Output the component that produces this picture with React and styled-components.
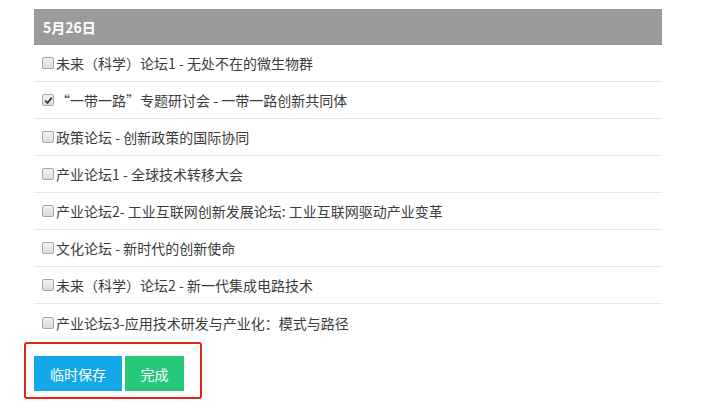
import React from "react";
import styled, { createGlobalStyle } from "styled-components";

const Global = createGlobalStyle`
  html, body { margin: 0; padding: 0; background: #fff; }
  body { font-family: "Noto Sans CJK SC", "Noto Sans", sans-serif; }
`;

const Page = styled.div`
  width: 628px;
  padding: 9px 0 0 34px;
`;

const Header = styled.div`
  height: 36px;
  background: #9b9b9b;
  color: #fff;
  font-weight: 700;
  font-size: 14px;
  display: flex;
  align-items: center;
  padding-left: 9px;
  box-sizing: border-box;
`;

const List = styled.div`
  display: flex;
  flex-direction: column;
`;

const Row = styled.label`
  height: 37px;
  box-sizing: border-box;
  display: flex;
  align-items: center;
  padding-left: 8px;
  border-bottom: ${(p) => (p.$last ? "none" : "1px solid #e6e6e6")};
  color: #3c3c3c;
  font-size: 14px;
  font-family: "Noto Sans CJK SC", "Noto Sans", sans-serif;
`;

const Box = styled.span`
  width: 10px;
  height: 10px;
  border: 1px solid #a9a9a9;
  border-radius: 2px;
  background: linear-gradient(#f2f2f2, #dcdcdc);
  margin-right: 2px;
  display: flex;
  align-items: center;
  justify-content: center;
  flex-shrink: 0;
`;

const Actions = styled.div`
  margin-left: -10px;
  margin-top: 1px;
  width: 178px;
  height: 57px;
  box-sizing: border-box;
  border: 2px solid #e8231c;
  border-radius: 3px;
  padding: 12px 0 0 8px;
  display: flex;
  gap: 3px;
`;

const Button = styled.button`
  height: 35px;
  width: ${(p) => p.$w}px;
  border: none;
  color: #fff;
  font-size: 14px;
  font-family: "Noto Sans CJK SC", "Noto Sans", sans-serif;
  background: ${(p) => p.$bg};
  padding: 0;
  cursor: pointer;
`;

const items = [
  "未来（科学）论坛1 - 无处不在的微生物群",
  "“一带一路”专题研讨会 - 一带一路创新共同体",
  "政策论坛 - 创新政策的国际协同",
  "产业论坛1 - 全球技术转移大会",
  "产业论坛2- 工业互联网创新发展论坛: 工业互联网驱动产业变革",
  "文化论坛 - 新时代的创新使命",
  "未来（科学）论坛2 - 新一代集成电路技术",
  "产业论坛3-应用技术研发与产业化：模式与路径",
];

function Check({ checked }) {
  return (
    <Box>
      {checked && (
        <svg width="9" height="9" viewBox="0 0 9 9">
          <path d="M1.2 4.6 L3.5 7 L7.8 1.6" fill="none" stroke="#333" strokeWidth="1.8" />
        </svg>
      )}
    </Box>
  );
}

export default function App() {
  return (
    <>
      <Global />
      <Page>
        <Header>5月26日</Header>
        <List>
          {items.map((t, i) => (
            <Row key={i} $last={i === items.length - 1}>
              <Check checked={i === 1} />
              {t}
            </Row>
          ))}
        </List>
        <Actions>
          <Button $w={88} $bg="#15a8e9">临时保存</Button>
          <Button $w={59} $bg="#27c87a">完成</Button>
        </Actions>
      </Page>
    </>
  );
}
